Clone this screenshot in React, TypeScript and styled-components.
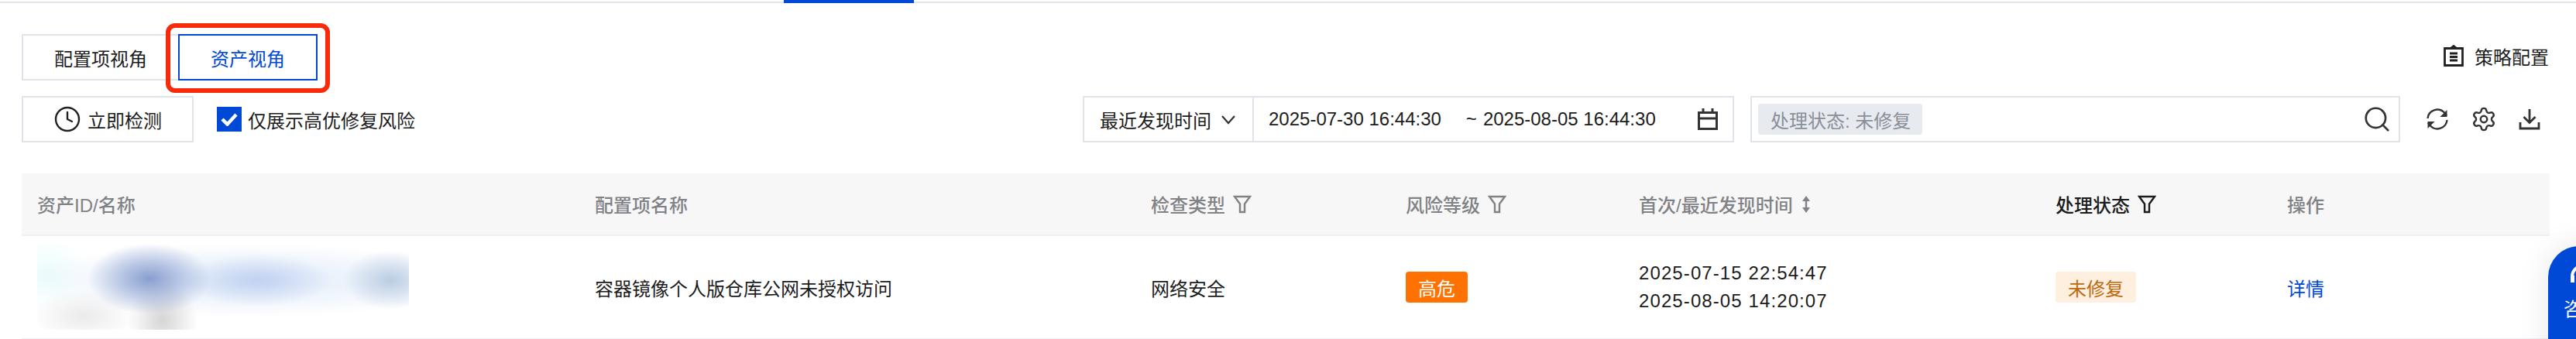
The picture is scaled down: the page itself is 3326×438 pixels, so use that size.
import styled, { createGlobalStyle } from "styled-components";
import { Clock, Search, Settings } from "lucide-react";

const GlobalStyle = createGlobalStyle`
  html, body {
    margin: 0;
    padding: 0;
    background: #fff;
  }
  body {
    width: 3326px;
    height: 438px;
    overflow: hidden;
    font-family: "Liberation Sans", "Noto Sans CJK SC", sans-serif;
    font-size: 24px;
    color: #1c1c1c;
  }
  * {
    box-sizing: border-box;
  }
`;

const Page = styled.div`
  position: relative;
  width: 3326px;
  height: 438px;
  overflow: hidden;
`;
const Rail = styled.div`
  height: 4px;
  padding-left: 1012px;
  border-bottom: 2px solid #e2e6ed;
`;
const RailActive = styled.div`
  width: 168px;
  height: 4px;
  background: #0049d6;
`;
const Content = styled.div`
  padding: 40px 34px 0 28px;
`;
const TabRow = styled.div`
  display: flex;
  justify-content: space-between;
  align-items: center;
  height: 60px;
`;
const Tabs = styled.div`
  display: flex;
`;
const Tab = styled.div<{ $active?: boolean }>`
  position: relative;
  display: flex;
  align-items: center;
  justify-content: center;
  width: ${(p) => (p.$active ? "180px" : "204px")};
  height: 60px;
  margin-left: ${(p) => (p.$active ? "-2px" : "0")};
  border: 2px solid ${(p) => (p.$active ? "#0049d6" : "#dfe3ea")};
  color: ${(p) => (p.$active ? "#0049d6" : "#1c1c1c")};
`;
const Highlight = styled.div`
  position: absolute;
  inset: -16px -18px -18px;
  border: 6px solid #f92a0a;
  border-radius: 12px;
`;
const Strategy = styled.div`
  display: flex;
  align-items: center;
  gap: 14px;
  padding-right: 1px;
  margin-top: -4px;
`;
const FilterRow = styled.div`
  display: flex;
  justify-content: space-between;
  align-items: center;
  height: 60px;
  margin-top: 20px;
`;
const Group = styled.div`
  display: flex;
  align-items: center;
`;
const OutlineButton = styled.div`
  display: flex;
  align-items: center;
  justify-content: center;
  gap: 8px;
  width: 222px;
  height: 60px;
  border: 2px solid #dfe3ea;
`;
const CheckLabel = styled.label`
  display: flex;
  align-items: center;
  gap: 8px;
  margin-left: 30px;
`;
const CheckBox = styled.span`
  display: flex;
  align-items: center;
  justify-content: center;
  width: 32px;
  height: 32px;
  background: #0049d6;
`;
const DateGroup = styled.div`
  display: flex;
  width: 841px;
  height: 60px;
  border: 2px solid #dfe3ea;
`;
const DateType = styled.div`
  display: flex;
  align-items: center;
  gap: 12px;
  width: 219px;
  padding-left: 20px;
  border-right: 2px solid #dfe3ea;
`;
const DateRange = styled.div`
  display: flex;
  align-items: center;
  flex: 1;
  padding: 0 18px 0 19px;
`;
const DateValue = styled.span`
  white-space: pre;
`;
const DateSep = styled.span`
  margin: 0 8px 0 32px;
`;
const CalendarSlot = styled.span`
  display: flex;
  margin-left: auto;
`;
const SearchBox = styled.div`
  display: flex;
  align-items: center;
  justify-content: space-between;
  width: 839px;
  height: 60px;
  margin-left: 21px;
  padding: 0 9px 0 8px;
  border: 2px solid #dfe3ea;
`;
const SearchTag = styled.span`
  display: flex;
  align-items: center;
  height: 40px;
  padding: 0 15px 0 16px;
  border-radius: 4px;
  background: #e7eaef;
  color: #8a8f99;
`;
const ToolIcons = styled.div`
  display: flex;
  align-items: center;
  gap: 28px;
  margin-left: 33px;
  padding-right: 12px;
`;
const COLUMNS = "720px 718px 329px 301px 538px 299px 359px";
const HeaderRow = styled.div`
  display: grid;
  grid-template-columns: ${COLUMNS};
  align-items: center;
  height: 81px;
  margin-top: 40px;
  background: #f7f7f8;
  border-bottom: 2px solid #f0f0f4;
`;
const HeaderCell = styled.div<{ $active?: boolean }>`
  display: flex;
  align-items: center;
  gap: 10px;
  padding-left: 20px;
  font-weight: 500;
  color: ${(p) => (p.$active ? "#1c1c1c" : "#808285")};
`;
const BodyRow = styled.div`
  display: grid;
  grid-template-columns: ${COLUMNS};
  align-items: center;
  height: 133px;
  border-bottom: 1px solid #eceef2;
`;
const BodyCell = styled.div`
  display: flex;
  align-items: center;
  padding-left: 20px;
`;
const Blurred = styled.div`
  width: 480px;
  height: 110px;
  background:
    radial-gradient(ellipse 80px 46px at 145px 44px, rgba(132, 154, 206, 0.95), rgba(132, 154, 206, 0)),
    radial-gradient(ellipse 95px 34px at 285px 46px, rgba(190, 207, 240, 0.9), rgba(190, 207, 240, 0)),
    radial-gradient(ellipse 62px 38px at 456px 46px, rgba(180, 200, 224, 0.9), rgba(180, 200, 224, 0)),
    radial-gradient(ellipse 45px 50px at 162px 98px, rgba(185, 185, 185, 0.6), rgba(185, 185, 185, 0)),
    radial-gradient(ellipse 70px 34px at 60px 92px, rgba(218, 218, 218, 0.55), rgba(218, 218, 218, 0)),
    radial-gradient(ellipse 300px 48px at 270px 46px, rgba(220, 233, 248, 0.95), rgba(220, 233, 248, 0)),
    radial-gradient(ellipse 50px 50px at 12px 36px, rgba(236, 253, 253, 1), rgba(236, 253, 253, 0)),
    #ffffff;
`;
const Badge = styled.span<{ $tone: "high" | "open" }>`
  display: flex;
  align-items: center;
  justify-content: center;
  height: 40px;
  padding: 0 16px;
  border-radius: 4px;
  background: ${(p) => (p.$tone === "high" ? "#ff7200" : "#ffefdf")};
  color: ${(p) => (p.$tone === "high" ? "#ffffff" : "#bd6a0f")};
`;
const Times = styled.div`
  line-height: 36px;
  letter-spacing: 1.1px;
`;
const DetailLink = styled.span`
  color: #0049d6;
`;
const Float = styled.div`
  position: absolute;
  top: 318px;
  left: 3290px;
  display: flex;
  flex-direction: column;
  align-items: center;
  width: 88px;
  height: 180px;
  padding-top: 24px;
  border-radius: 40px;
  background: #0049d6;
  color: #fff;
  box-shadow: 0 0 40px rgba(0, 0, 0, 0.1);
`;
const FloatLabel = styled.span`
  margin-top: 20px;
  white-space: nowrap;
  line-height: 28px;
`;

function FunnelIcon() {
  return (
    <svg width="24" height="24" viewBox="0 0 24 24" fill="none" stroke="currentColor" strokeWidth="2.4">
      <path d="M2 2h20l-7 9.500V22H9V11.500z" />
    </svg>
  );
}

function SortIcon() {
  return (
    <svg width="14" height="24" viewBox="0 0 14 24" fill="#808285">
      <path d="M7 1l5 7H8.200v8H12l-5 7-5-7h3.800V8H2z" />
    </svg>
  );
}

function ChevronIcon() {
  return (
    <svg width="20" height="20" viewBox="0 0 20 20" fill="none" stroke="#333" strokeWidth="2.2">
      <path d="M2 6l8 9 8-9" />
    </svg>
  );
}

function CalendarIcon() {
  return (
    <svg width="28" height="30" viewBox="0 0 28 30" fill="none" stroke="#333" strokeWidth="3">
      <path d="M2.500 6.500h23v21h-23zM2.500 14h23M8 1v6M20 1v6" />
    </svg>
  );
}

function RefreshIcon() {
  return (
    <svg width="30" height="30" viewBox="0 0 30 30" fill="none" stroke="#333" strokeWidth="2.400">
      <path d="M2.500 14A12.500 12.500 0 0 1 24 6.500l3 4" />
      <path d="M27.500 16A12.500 12.500 0 0 1 6 23.500l-3-4" />
      <path d="M27.500 3v9h-9z" fill="#333" stroke="none" />
      <path d="M2.500 27v-9h9z" fill="#333" stroke="none" />
    </svg>
  );
}

function DownloadIcon() {
  return (
    <svg width="28" height="28" viewBox="0 0 28 28" fill="none" stroke="#333" strokeWidth="2.800">
      <path d="M14 1v17M6.500 11l7.500 7.500 7.500-7.500M2 18v8h24v-8" />
    </svg>
  );
}

function ClipboardIcon() {
  return (
    <svg width="26" height="28" viewBox="0 0 26 28" fill="none" stroke="#222" strokeWidth="2.800">
      <path d="M1.500 4.500h23v22h-23zM9 4.500l4-3 4 3" />
      <path d="M8 11h10M8 15.500h10M8 20h10" />
    </svg>
  );
}

function HeadsetIcon() {
  return (
    <svg width="32" height="24" viewBox="0 0 32 24" fill="none" stroke="#fff" strokeWidth="4">
      <path d="M3 23V15a13 13 0 0 1 26 0v8" />
      <path d="M2 14h4v9H2zM26 14h4v9h-4z" fill="#fff" stroke="none" />
    </svg>
  );
}

export default function App() {
  return (
    <Page>
      <GlobalStyle />
      <Rail>
        <RailActive />
      </Rail>
      <Content>
        <TabRow>
          <Tabs>
            <Tab>配置项视角</Tab>
            <Tab $active>
              资产视角
              <Highlight />
            </Tab>
          </Tabs>
          <Strategy>
            <ClipboardIcon />
            策略配置
          </Strategy>
        </TabRow>
        <FilterRow>
          <Group>
            <OutlineButton>
              <Clock size={36} strokeWidth={1.6} color="#222" />
              立即检测
            </OutlineButton>
            <CheckLabel>
              <CheckBox>
                <svg width="22" height="18" viewBox="0 0 22 18" fill="none" stroke="#fff" strokeWidth="4.500">
                  <path d="M2 9l6.500 6.500L20 3" />
                </svg>
              </CheckBox>
              仅展示高优修复风险
            </CheckLabel>
          </Group>
          <Group>
            <DateGroup>
              <DateType>
                最近发现时间
                <ChevronIcon />
              </DateType>
              <DateRange>
                <DateValue>2025-07-30 16:44:30</DateValue>
                <DateSep>~</DateSep>
                <DateValue>2025-08-05 16:44:30</DateValue>
                <CalendarSlot>
                  <CalendarIcon />
                </CalendarSlot>
              </DateRange>
            </DateGroup>
            <SearchBox>
              <SearchTag>处理状态: 未修复</SearchTag>
              <Search size={38} strokeWidth={1.7} color="#333" />
            </SearchBox>
            <ToolIcons>
              <RefreshIcon />
              <Settings size={34} strokeWidth={1.7} color="#333" />
              <DownloadIcon />
            </ToolIcons>
          </Group>
        </FilterRow>
        <HeaderRow>
          <HeaderCell>资产ID/名称</HeaderCell>
          <HeaderCell>配置项名称</HeaderCell>
          <HeaderCell>
            检查类型
            <FunnelIcon />
          </HeaderCell>
          <HeaderCell>
            风险等级
            <FunnelIcon />
          </HeaderCell>
          <HeaderCell>
            首次/最近发现时间
            <SortIcon />
          </HeaderCell>
          <HeaderCell $active>
            处理状态
            <FunnelIcon />
          </HeaderCell>
          <HeaderCell>操作</HeaderCell>
        </HeaderRow>
        <BodyRow>
          <BodyCell>
            <Blurred />
          </BodyCell>
          <BodyCell>容器镜像个人版仓库公网未授权访问</BodyCell>
          <BodyCell>网络安全</BodyCell>
          <BodyCell>
            <Badge $tone="high">高危</Badge>
          </BodyCell>
          <BodyCell>
            <Times>
              2025-07-15 22:54:47
              <br />
              2025-08-05 14:20:07
            </Times>
          </BodyCell>
          <BodyCell>
            <Badge $tone="open">未修复</Badge>
          </BodyCell>
          <BodyCell>
            <DetailLink>详情</DetailLink>
          </BodyCell>
        </BodyRow>
      </Content>
      <Float>
        <HeadsetIcon />
        <FloatLabel>咨询</FloatLabel>
      </Float>
    </Page>
  );
}
